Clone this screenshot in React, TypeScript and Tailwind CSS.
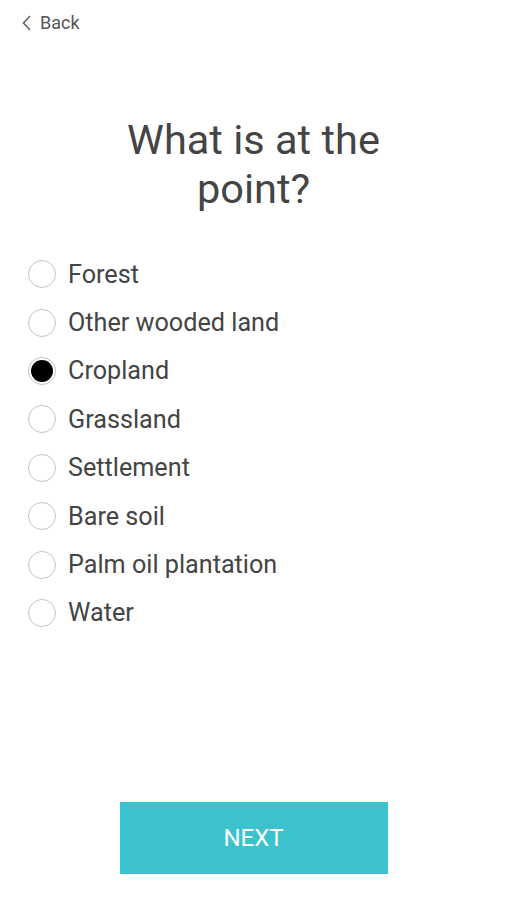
import { useState } from "react";

const options = [
  "Forest",
  "Other wooded land",
  "Cropland",
  "Grassland",
  "Settlement",
  "Bare soil",
  "Palm oil plantation",
  "Water",
];

export default function App() {
  const [selected, setSelected] = useState("Cropland");

  return (
    <div className="flex h-[900px] w-full flex-col bg-white font-['Roboto',sans-serif] text-[#444444]">
      <div className="flex h-11 items-center pl-[21px] pt-px text-[18px] text-[#555555]">
        <svg width="12" height="18" viewBox="0 0 12 18" className="mr-[7px]">
          <path d="M9 2 L2.5 9 L9 16" fill="none" stroke="#666666" strokeWidth="1.6" />
        </svg>
        <span>Back</span>
      </div>

      <h1 className="mt-[71px] px-8 text-center text-[41.5px] leading-[49px] text-[#444444]">
        What is at the
        <br />
        point?
      </h1>

      <ul className="mt-[37px] flex flex-col pl-[28px]">
        {options.map((o) => (
          <li
            key={o}
            onClick={() => setSelected(o)}
            className="flex h-[48.4px] cursor-pointer items-center gap-[12px]"
          >
            <span className="flex size-[28px] items-center justify-center rounded-full border-[1.5px] border-[#c4c4c4]">
              {selected === o && <span className="size-[22px] rounded-full bg-black" />}
            </span>
            <span className="text-[25.2px] leading-none">{o}</span>
          </li>
        ))}
      </ul>

      <div className="mt-auto mb-[26px] flex justify-center">
        <button className="h-[72px] w-[268px] bg-[#3cc2cc] text-[24px] text-white">NEXT</button>
      </div>
    </div>
  );
}
